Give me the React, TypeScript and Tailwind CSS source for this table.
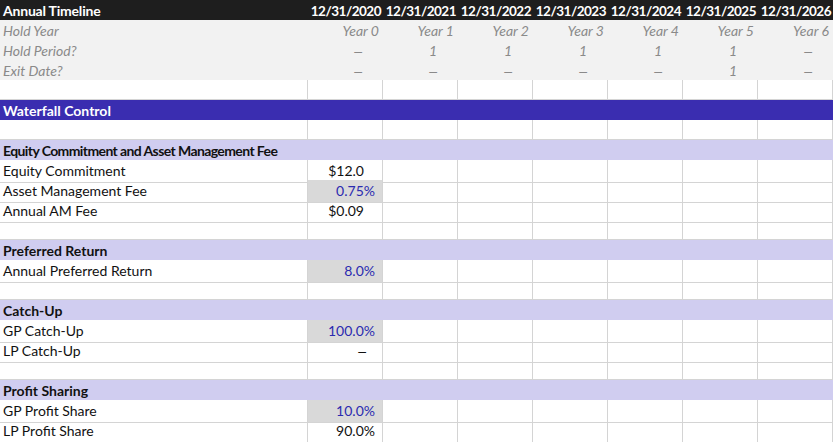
const dates = ['12/31/2020', '12/31/2021', '12/31/2022', '12/31/2023', '12/31/2024', '12/31/2025', '12/31/2026']

const timeline = [
  { label: 'Hold Year', values: ['Year 0', 'Year 1', 'Year 2', 'Year 3', 'Year 4', 'Year 5', 'Year 6'], pad: 'pr-[4px]' },
  { label: 'Hold Period?', values: ['–', '1', '1', '1', '1', '1', '–'], pad: 'pr-[21px]' },
  { label: 'Exit Date?', values: ['–', '–', '–', '–', '–', '1', '–'], pad: 'pr-[21px]' },
]

type Row =
  | { kind: 'blank' }
  | { kind: 'band'; label: string }
  | { kind: 'section'; label: string; tight?: boolean }
  | { kind: 'data'; label: string; value: string; input?: boolean; pad: string }

const rows: Row[] = [
  { kind: 'blank' },
  { kind: 'band', label: 'Waterfall Control' },
  { kind: 'blank' },
  { kind: 'section', label: 'Equity Commitment and Asset Management Fee', tight: true },
  { kind: 'data', label: 'Equity Commitment', value: '$12.0', pad: 'pr-[18px]' },
  { kind: 'data', label: 'Asset Management Fee', value: '0.75%', input: true, pad: 'pr-[7px]' },
  { kind: 'data', label: 'Annual AM Fee', value: '$0.09', pad: 'pr-[18px]' },
  { kind: 'blank' },
  { kind: 'section', label: 'Preferred Return' },
  { kind: 'data', label: 'Annual Preferred Return', value: '8.0%', input: true, pad: 'pr-[7px]' },
  { kind: 'blank' },
  { kind: 'section', label: 'Catch-Up' },
  { kind: 'data', label: 'GP Catch-Up', value: '100.0%', input: true, pad: 'pr-[7px]' },
  { kind: 'data', label: 'LP Catch-Up', value: '–', pad: 'pr-[16px]' },
  { kind: 'blank' },
  { kind: 'section', label: 'Profit Sharing' },
  { kind: 'data', label: 'GP Profit Share', value: '10.0%', input: true, pad: 'pr-[7px]' },
  { kind: 'data', label: 'LP Profit Share', value: '90.0%', pad: 'pr-[7px]' },
]

// Excel sits text low in the cell, hence the taller line box
const grid = 'grid grid-cols-[308px_repeat(7,75px)] h-[20px] leading-[22px]'
const line = 'border-r border-b border-[#d4d4d4]'

// Excel-style accounting dash, a touch wider than Lato's own
function Val({ v }: { v: string }) {
  if (v === '–') return <span className="font-['Liberation_Sans',sans-serif] not-italic">–</span>
  return <>{v}</>
}

function EmptyCells({ count }: { count: number }) {
  return (
    <>
      {Array.from({ length: count }).map((_, i) => (
        <div key={i} className={line} />
      ))}
    </>
  )
}

export default function App() {
  return (
    <div className="w-[835px] h-[442px] bg-white font-['Lato',sans-serif] text-[14px] text-[#111] overflow-hidden">
      <div className="w-[833px]">
        {/* Header */}
        <div className={`${grid} bg-[#1e1e1e] text-white font-bold`}>
          <div className="pl-[3px] tracking-[-0.2px]">Annual Timeline</div>
          {dates.map((d) => (
            <div key={d} className="text-right pr-[2px] text-[13.5px] tracking-[-0.5px]">{d}</div>
          ))}
        </div>

        {/* Timeline */}
        {timeline.map((t) => (
          <div key={t.label} className={`${grid} bg-[#f2f2f2] italic text-[#8a8a8a]`}>
            <div className="pl-[3px]">{t.label}</div>
            {t.values.map((v, i) => (
              <div key={i} className={`text-right ${t.pad}`}>
                <Val v={v} />
              </div>
            ))}
          </div>
        ))}

        {rows.map((r, idx) => {
          if (r.kind === 'blank') {
            return (
              <div key={idx} className={grid}>
                <div className={line} />
                <EmptyCells count={7} />
              </div>
            )
          }
          if (r.kind === 'band') {
            return (
              <div key={idx} className={`${grid} bg-[#3a2db0] text-white font-bold`}>
                <div className="pl-[3px]">{r.label}</div>
              </div>
            )
          }
          if (r.kind === 'section') {
            return (
              <div key={idx} className={`${grid} bg-[#d0cdf0] font-bold`}>
                <div className={`pl-[3px] whitespace-nowrap ${r.tight ? 'tracking-[-0.6px]' : ''}`}>
                  {r.label}
                </div>
              </div>
            )
          }
          return (
            <div key={idx} className={grid}>
              <div className={`pl-[3px] ${line}`}>{r.label}</div>
              <div
                className={`text-right ${r.pad} ${line} ${
                  r.input ? 'bg-[#d9d9d9] text-[#2b2bb0]' : ''
                }`}
              >
                <Val v={r.value} />
              </div>
              <EmptyCells count={6} />
            </div>
          )
        })}
      </div>
    </div>
  )
}
